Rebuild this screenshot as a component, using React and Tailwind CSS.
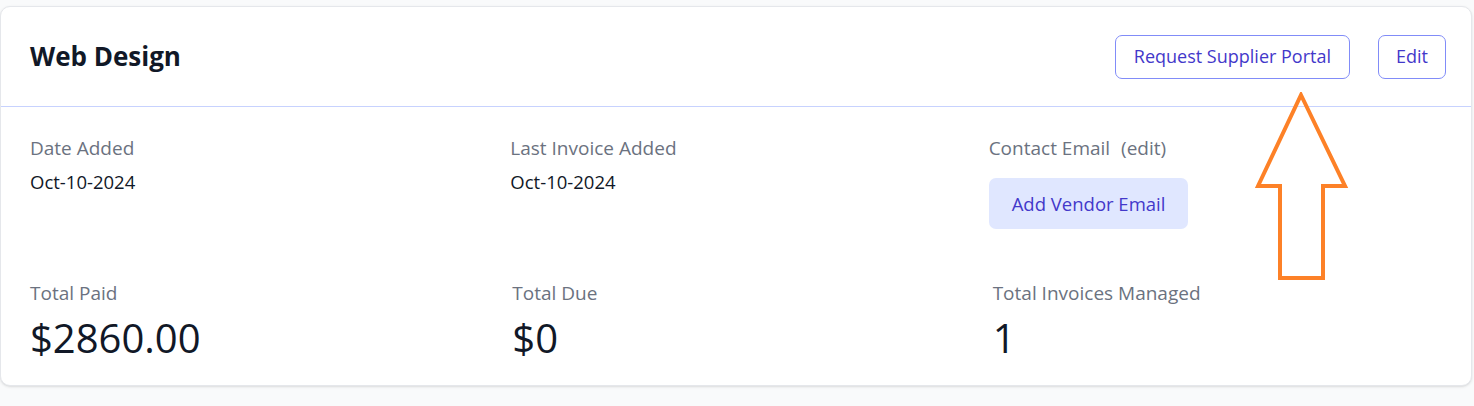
import React from 'react';

// ─── Sub-components ───────────────────────────────────────────────────────────

function Field({ label, value, big, className = '' }) {
  return (
    <div className={className}>
      <p className="text-[19px] leading-[27px] text-[#6b7280]">{label}</p>
      {value !== undefined && (
        <p
          className={
            big
              ? 'mt-[6px] text-[40px] leading-[50px] text-[#111827]'
              : 'mt-[6px] text-[18.5px] leading-[27px] text-[#111827]'
          }
        >
          {value}
        </p>
      )}
    </div>
  );
}

function Arrow() {
  return (
    <svg
      className="absolute left-[1255px] top-[92px] pointer-events-none"
      width="94"
      height="190"
      viewBox="0 0 94 190"
      fill="none"
    >
      <path
        d="M46 3 L90 94 L68 94 L68 186 L25 186 L25 94 L3 94 Z"
        stroke="#fd8127"
        strokeWidth="4"
        strokeLinejoin="miter"
      />
    </svg>
  );
}

// ─── Main Component ───────────────────────────────────────────────────────────

export default function App() {
  return (
    <div
      className="relative min-h-[406px] bg-[#f9fafb] pt-[6px] pr-[2px]"
      style={{ fontFamily: '"Open Sans", "Noto Sans", sans-serif' }}
    >
      <div className="h-[380px] rounded-[10px] border border-[#e5e7eb] bg-white shadow-sm">
        <div className="flex h-[100px] items-center justify-between border-b border-[#c7d2fe] pl-[29px] pr-[25px]">
          <h1 className="text-[26px] font-bold text-[#111827]">Web Design</h1>
          <div className="flex items-center gap-[28px]">
            <button className="h-[44px] rounded-[7px] border border-[#818cf8] px-[18px] text-[18px] font-medium text-[#4338ca]">
              Request Supplier Portal
            </button>
            <button className="h-[44px] rounded-[7px] border border-[#818cf8] px-[17px] text-[18px] font-medium text-[#4338ca]">
              Edit
            </button>
          </div>
        </div>

        <div className="grid grid-cols-3 pl-[29px] pt-[28px]">
          <Field label="Date Added" value="Oct-10-2024" />
          <Field label="Last Invoice Added" value="Oct-10-2024" />
          <div className="-ml-[2px]">
            <p className="text-[19px] leading-[27px] text-[#6b7280]">
              Contact Email <span className="ml-[6px]">(edit)</span>
            </p>
            <button className="mt-[16px] h-[51px] rounded-[7px] bg-[#e0e7ff] px-[23px] text-[18.5px] font-medium text-[#4338ca]">
              Add Vendor Email
            </button>
          </div>
        </div>

        <div className="mt-[51px] grid grid-cols-3 pl-[29px]">
          <Field label="Total Paid" value="$2860.00" big />
          <Field label="Total Due" value="$0" big className="pl-[2px]" />
          <Field label="Total Invoices Managed" value="1" big className="pl-[2px]" />
        </div>
      </div>
      <Arrow />
    </div>
  );
}
